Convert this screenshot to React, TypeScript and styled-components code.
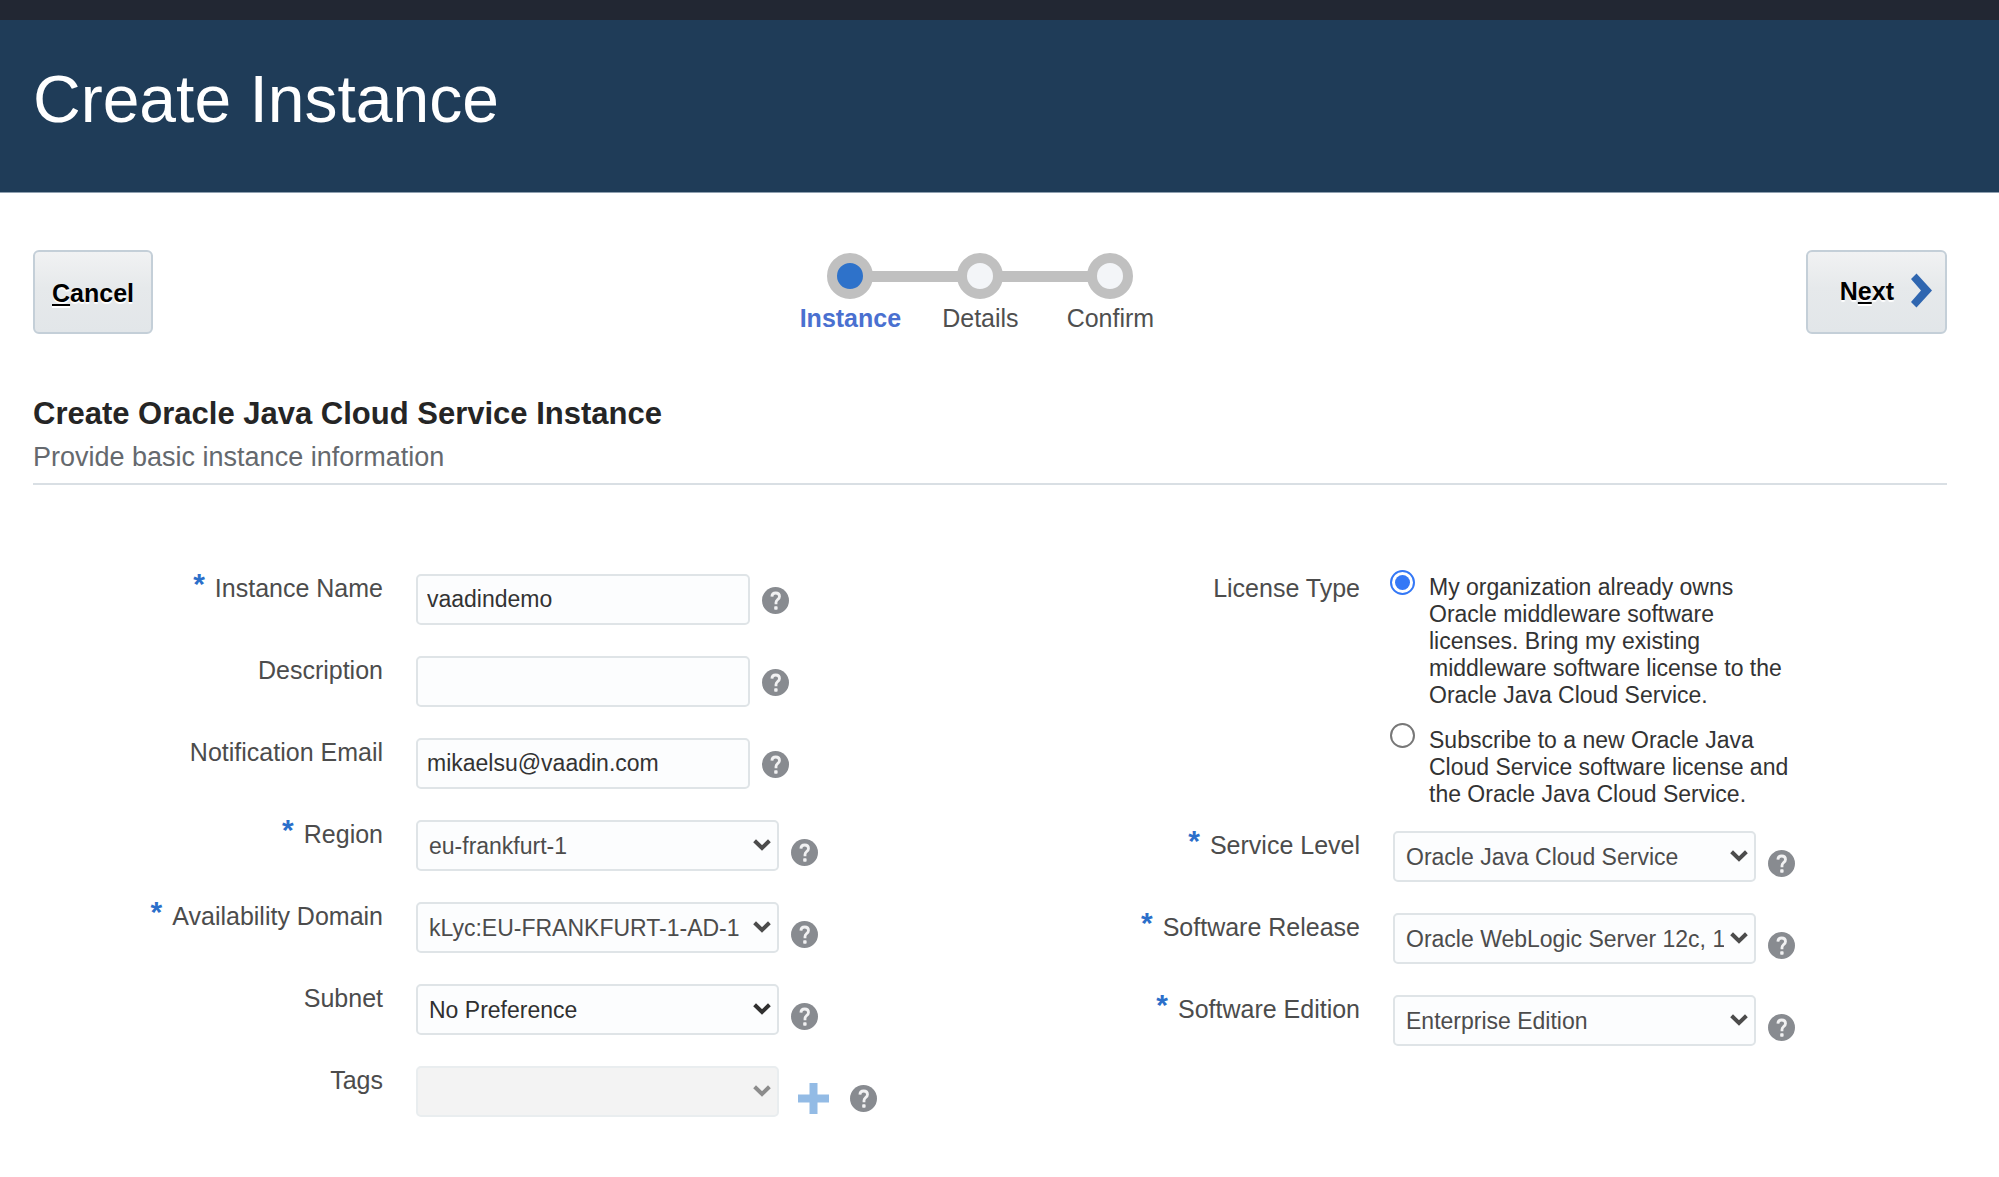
import React, { useState } from "react";
import styled, { createGlobalStyle, css } from "styled-components";

const GlobalStyle = createGlobalStyle`
  *, *::before, *::after { box-sizing: border-box; }
  body {
    margin: 0;
    background: #ffffff;
    color: #333333;
    font-family: "Liberation Sans", Arial, Helvetica, sans-serif;
  }
  button, input, select { font-family: inherit; margin: 0; }
`;

const TopBar = styled.div`
  height: 20px;
  background: #222733;
`;

const Header = styled.header`
  padding: 41px 33px 55px;
  background: #1f3c58;
  border-bottom: 1px solid #8fa0b0;
`;

const Title = styled.h1`
  margin: 0;
  color: #ffffff;
  font-size: 66px;
  line-height: 76px;
  font-weight: 400;
`;

const Content = styled.main`
  padding: 57px 52px 40px 33px;
`;

const Toolbar = styled.div`
  display: flex;
  justify-content: space-between;
  align-items: flex-start;
`;

const ActionButton = styled.button`
  display: flex;
  align-items: center;
  justify-content: center;
  gap: 17px;
  height: 84px;
  padding: 1px 17px 0;
  border: 2px solid #c4cfd8;
  border-radius: 6px;
  background: linear-gradient(#f1f2f3, #e6e9eb 45%, #e2e6e9);
  color: #000000;
  font-size: 25px;
  line-height: 30px;
  font-weight: 700;
  text-shadow: 0 2px 1px #ffffff;
  cursor: pointer;
`;

const NextButton = styled(ActionButton)`
  padding: 0 13px 3px 32px;
`;

const AccessKey = styled.span`
  text-decoration: underline;
  text-decoration-thickness: 2px;
  text-underline-offset: 2px;
  text-decoration-skip-ink: none;
`;

const StepList = styled.ol`
  display: flex;
  margin: 0;
  padding: 3px 0 0 2px;
  list-style: none;
`;

const StepItem = styled.li<{ $active?: boolean }>`
  width: 130px;
  text-align: center;
  font-size: 25px;
  line-height: 30px;
  font-weight: ${(p) => (p.$active ? 700 : 400)};
  color: ${(p) => (p.$active ? "#4a70d0" : "#4f4f4f")};
`;

const StepTrack = styled.div`
  display: flex;
  align-items: center;
  margin-bottom: 4px;
`;

const StepLine = styled.span<{ $visible: boolean }>`
  flex: 1;
  height: 11px;
  background: ${(p) => (p.$visible ? "#c0c0c0" : "transparent")};
`;

const StepDot = styled.span<{ $active?: boolean }>`
  width: 46px;
  height: 46px;
  margin: 0 -1px;
  border: 10px solid #c0c0c0;
  border-radius: 50%;
  background: ${(p) => (p.$active ? "#2e72ca" : "#f3f5f8")};
`;

const SectionHeader = styled.div`
  margin-top: 62px;
  padding-bottom: 10px;
  border-bottom: 2px solid #d9dfe4;
`;

const SectionTitle = styled.h2`
  margin: 0 0 9px;
  color: #252525;
  font-size: 31px;
  line-height: 36px;
  font-weight: 700;
`;

const SectionText = styled.p`
  margin: 0;
  color: #65696e;
  font-size: 27px;
  line-height: 32px;
`;

const Form = styled.form`
  display: grid;
  grid-template-columns: 1fr 1fr;
  column-gap: 40px;
  padding-top: 89px;
`;

const Row = styled.div`
  display: grid;
  grid-template-columns: 350px 1fr;
  column-gap: 33px;
  margin-bottom: 31px;
`;

const LicenseRow = styled(Row)`
  margin-bottom: 27px;
`;

const labelStyle = css`
  display: flex;
  justify-content: flex-end;
  align-items: flex-start;
  gap: 10px;
  color: #4c4c4c;
  font-size: 25px;
  line-height: 28px;
`;

const Label = styled.label`
  ${labelStyle}
`;

const GroupLabel = styled.span`
  ${labelStyle}
`;

const Required = styled.span`
  color: #2b6fca;
  font-size: 30px;
  line-height: 20px;
  font-weight: 700;
`;

const Controls = styled.div`
  display: flex;
  align-items: center;
`;

const TextInput = styled.input`
  width: 334px;
  height: 51px;
  padding: 0 9px;
  border: 2px solid #dfe4e7;
  border-radius: 5px;
  background: #fcfdfe;
  color: #333333;
  font-size: 23px;
`;

const SelectBox = styled.div<{ $tone: string }>`
  position: relative;
  width: 363px;
  color: ${(p) => p.$tone};

  svg {
    position: absolute;
    right: 8px;
    top: 19px;
    pointer-events: none;
  }
`;

const Select = styled.select`
  display: block;
  width: 100%;
  height: 51px;
  padding: 0 30px 0 11px;
  appearance: none;
  border: 2px solid #dfe4e7;
  border-radius: 5px;
  background: #fcfdfe;
  color: inherit;
  font-size: 23px;
  opacity: 1;

  &:disabled {
    background: #f3f3f3;
    border-color: #e9edef;
  }
`;

const IconButton = styled.button<{ $low?: boolean; $space?: number }>`
  display: flex;
  padding: 0;
  margin-left: ${(p) => p.$space ?? 12}px;
  margin-top: ${(p) => (p.$low ? 14 : 2)}px;
  border: 0;
  background: none;
  cursor: pointer;
`;

const RadioGroup = styled.div`
  display: flex;
  flex-direction: column;
  gap: 18px;
  margin-top: -4px;
`;

const RadioOption = styled.div`
  display: flex;
  align-items: flex-start;
  gap: 14px;
  margin-left: -3px;
`;

const Radio = styled.input`
  flex: none;
  width: 25px;
  height: 25px;
  appearance: none;
  padding: 3px;
  border: 2px solid #777777;
  border-radius: 50%;
  background: #ffffff;

  &:checked {
    border-color: #3478f6;
    background: #3478f6 content-box;
  }
`;

const RadioLabel = styled.label`
  max-width: 363px;
  padding-top: 4px;
  margin-bottom: -4px;
  color: #333333;
  font-size: 23px;
  line-height: 27px;
`;

function ChevronDown() {
  return (
    <svg width="18" height="12" viewBox="0 0 18 12" fill="none" aria-hidden="true">
      <path d="M1.6 1.8 9 9 16.4 1.8" stroke="currentColor" strokeWidth="4" />
    </svg>
  );
}

function ChevronRight() {
  return (
    <svg width="21" height="35" viewBox="0 0 21 35" aria-hidden="true">
      <path d="M0 6 5.5 0.5 21 17.5 5.5 34.5 0 29 10 17.5Z" fill="#2f66b0" />
    </svg>
  );
}

function HelpButton({ topic, low, space }: { topic: string; low?: boolean; space?: number }) {
  return (
    <IconButton type="button" aria-label={`Help: ${topic}`} $low={low} $space={space}>
      <svg width="27" height="27" viewBox="0 0 27 27" fill="none" aria-hidden="true">
        <circle cx="13.5" cy="13.5" r="13.5" fill="#888b90" />
        <path
          d="M9.9 9.6C10 7 11.5 6 13.7 6c2.2 0 3.8 1.3 3.8 3.4 0 3-3.5 3.3-3.5 6v1.8"
          stroke="#f1f1f2"
          strokeWidth="2.8"
        />
        <rect x="12.2" y="19.3" width="3.4" height="3.4" rx="0.8" fill="#f1f1f2" />
      </svg>
    </IconButton>
  );
}

function FieldLabel({ id, text, required }: { id: string; text: string; required?: boolean }) {
  return (
    <Label htmlFor={id}>
      {required && <Required>*</Required>}
      {text}
    </Label>
  );
}

type TextFieldProps = { id: string; label: string; value?: string; required?: boolean };

function TextField({ id, label, value = "", required }: TextFieldProps) {
  return (
    <Row>
      <FieldLabel id={id} text={label} required={required} />
      <Controls>
        <TextInput id={id} type="text" defaultValue={value} />
        <HelpButton topic={label} />
      </Controls>
    </Row>
  );
}

type SelectFieldProps = {
  id: string;
  label: string;
  option?: string;
  required?: boolean;
  tone?: string;
  disabled?: boolean;
  addable?: boolean;
};

function SelectField({
  id,
  label,
  option = "",
  required,
  tone = "#4c4c4c",
  disabled,
  addable,
}: SelectFieldProps) {
  return (
    <Row>
      <FieldLabel id={id} text={label} required={required} />
      <Controls>
        <SelectBox $tone={tone}>
          <Select id={id} disabled={disabled}>
            <option>{option}</option>
          </Select>
          <ChevronDown />
        </SelectBox>
        {addable && (
          <IconButton type="button" aria-label="Add tag" $low $space={19}>
            <svg width="31" height="31" viewBox="0 0 31 31" aria-hidden="true">
              <path d="M11.5 0h8v11.5H31v8H19.5V31h-8V19.5H0v-8h11.5Z" fill="#93bbe5" />
            </svg>
          </IconButton>
        )}
        <HelpButton topic={label} low space={addable ? 21 : 12} />
      </Controls>
    </Row>
  );
}

const steps = ["Instance", "Details", "Confirm"];

const licenses = [
  {
    id: "byol",
    text: "My organization already owns Oracle middleware software licenses. Bring my existing middleware software license to the Oracle Java Cloud Service.",
  },
  {
    id: "subscribe",
    text: "Subscribe to a new Oracle Java Cloud Service software license and the Oracle Java Cloud Service.",
  },
];

export default function App() {
  const [license, setLicense] = useState("byol");

  return (
    <>
      <GlobalStyle />
      <TopBar />
      <Header>
        <Title>Create Instance</Title>
      </Header>
      <Content>
        <Toolbar>
          <ActionButton type="button">
            <span>
              <AccessKey>C</AccessKey>ancel
            </span>
          </ActionButton>
          <StepList>
            {steps.map((step, i) => (
              <StepItem key={step} $active={i === 0}>
                <StepTrack>
                  <StepLine $visible={i > 0} />
                  <StepDot $active={i === 0} />
                  <StepLine $visible={i < steps.length - 1} />
                </StepTrack>
                {step}
              </StepItem>
            ))}
          </StepList>
          <NextButton type="button">
            <span>
              N<AccessKey>e</AccessKey>xt
            </span>
            <ChevronRight />
          </NextButton>
        </Toolbar>

        <SectionHeader>
          <SectionTitle>Create Oracle Java Cloud Service Instance</SectionTitle>
          <SectionText>Provide basic instance information</SectionText>
        </SectionHeader>

        <Form>
          <div>
            <TextField id="name" label="Instance Name" value="vaadindemo" required />
            <TextField id="description" label="Description" />
            <TextField id="email" label="Notification Email" value="mikaelsu@vaadin.com" />
            <SelectField id="region" label="Region" option="eu-frankfurt-1" required />
            <SelectField
              id="domain"
              label="Availability Domain"
              option="kLyc:EU-FRANKFURT-1-AD-1"
              required
            />
            <SelectField id="subnet" label="Subnet" option="No Preference" tone="#303030" />
            <SelectField id="tags" label="Tags" tone="#8c8c8c" disabled addable />
          </div>
          <div>
            <LicenseRow>
              <GroupLabel id="license-label">License Type</GroupLabel>
              <RadioGroup role="radiogroup" aria-labelledby="license-label">
                {licenses.map((item) => (
                  <RadioOption key={item.id}>
                    <Radio
                      type="radio"
                      id={item.id}
                      name="license"
                      checked={license === item.id}
                      onChange={() => setLicense(item.id)}
                    />
                    <RadioLabel htmlFor={item.id}>{item.text}</RadioLabel>
                  </RadioOption>
                ))}
              </RadioGroup>
            </LicenseRow>
            <SelectField
              id="level"
              label="Service Level"
              option="Oracle Java Cloud Service"
              required
            />
            <SelectField
              id="release"
              label="Software Release"
              option="Oracle WebLogic Server 12c, 1"
              required
            />
            <SelectField
              id="edition"
              label="Software Edition"
              option="Enterprise Edition"
              required
            />
          </div>
        </Form>
      </Content>
    </>
  );
}
